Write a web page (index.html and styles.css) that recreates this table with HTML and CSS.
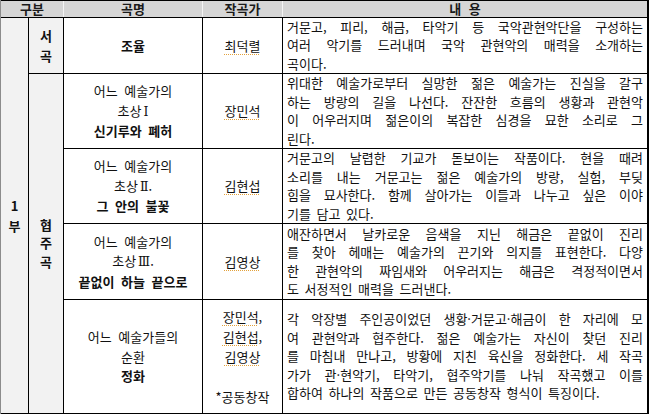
FILE: index.html
```html
<!DOCTYPE html>
<html lang="ko">
<head>
<meta charset="utf-8">
<title>공연 프로그램</title>
<link rel="stylesheet" href="styles.css">
</head>
<body>
<div class="program">
  <div class="head">
    <div class="h">구분</div>
    <div class="h">곡명</div>
    <div class="h">작곡가</div>
    <div class="h">내 용</div>
  </div>

  <div class="part"><p class="txt"><b>1<br>부</b></p></div>
  <div class="sect sect-open"><p class="txt"><b>서<br>곡</b></p></div>
  <div class="sect sect-conc"><p class="txt"><b>협<br>주<br>곡</b></p></div>

  <div class="title"><p class="txt"><b>조율</b></p></div>
  <div class="composer"><p class="txt"><span class="name">최덕렬</span></p></div>
  <div class="desc">
    <span class="ln">거문고, 피리, 해금, 타악기 등 국악관현악단을 구성하는</span>
    <span class="ln">여러 악기를 드러내며 국악 관현악의 매력을 소개하는</span>
    <span class="ln last">곡이다.</span>
  </div>

  <div class="title"><p class="txt">어느 예술가의<br>초상<span class="num">Ⅰ</span><br><b>신기루와 폐허</b></p></div>
  <div class="composer"><p class="txt"><span class="name">장민석</span></p></div>
  <div class="desc">
    <span class="ln">위대한 예술가로부터 실망한 젊은 예술가는 진실을 갈구</span>
    <span class="ln">하는 방랑의 길을 나선다. 잔잔한 흐름의 생황과 관현악</span>
    <span class="ln">이 어우러지며 젊은이의 복잡한 심경을 묘한 소리로 그</span>
    <span class="ln last">린다.</span>
  </div>

  <div class="title"><p class="txt">어느 예술가의<br>초상<span class="num">Ⅱ</span>.<br><b>그 안의 불꽃</b></p></div>
  <div class="composer"><p class="txt"><span class="name">김현섭</span></p></div>
  <div class="desc">
    <span class="ln">거문고의 날렵한 기교가 돋보이는 작품이다. 현을 때려</span>
    <span class="ln">소리를 내는 거문고는 젊은 예술가의 방랑, 실험, 부딪</span>
    <span class="ln">힘을 묘사한다. 함께 살아가는 이들과 나누고 싶은 이야</span>
    <span class="ln last">기를 담고 있다.</span>
  </div>

  <div class="title"><p class="txt">어느 예술가의<br>초상<span class="num">Ⅲ</span>.<br><b>끝없이 하늘 끝으로</b></p></div>
  <div class="composer"><p class="txt"><span class="name">김영상</span></p></div>
  <div class="desc">
    <span class="ln">애잔하면서 날카로운 음색을 지닌 해금은 끝없이 진리</span>
    <span class="ln">를 찾아 헤매는 예술가의 끈기와 의지를 표현한다. 다양</span>
    <span class="ln">한 관현악의 짜임새와 어우러지는 해금은 격정적이면서</span>
    <span class="ln last">도 서정적인 매력을 드러낸다.</span>
  </div>

  <div class="title"><p class="txt">어느 예술가들의<br>순환<br><b>정화</b></p></div>
  <div class="composer"><p class="txt composer-group"><span class="name">장민석</span>,<br><span class="name">김현섭</span>,<br><span class="name">김영상</span><br>&nbsp;<br>*공동창작</p></div>
  <div class="desc">
    <span class="ln">각 악장별 주인공이었던 생황·거문고·해금이 한 자리에 모</span>
    <span class="ln">여 관현악과 협주한다. 젊은 예술가는 자신이 찾던 진리</span>
    <span class="ln">를 마침내 만나고, 방황에 지친 육신을 정화한다. 세 작곡</span>
    <span class="ln">가가 관·현악기, 타악기, 협주악기를 나눠 작곡했고 이를</span>
    <span class="ln last">합하여 하나의 작품으로 만든 공동창작 형식이 특징이다.</span>
  </div>
</div>
</body>
</html>
```

FILE: styles.css
```css
* {
  box-sizing: border-box;
}

html, body {
  margin: 0;
  padding: 0;
  background: #ffffff;
}

body {
  font-family: "Noto Sans CJK KR", "Noto Sans", sans-serif;
  font-size: 13px;
  color: #111111;
}

.program {
  display: grid;
  grid-template-columns: 27px 34px 138px 79px 364px;
  grid-template-rows: 16px 55px 74px 74px 75px 113px;
  gap: 1px;
  width: 649px;
  height: 414px;
  padding: 1px 2px 1px 0;
  border-left: 1px solid #8c8c8c;
  background: #000000;
}

.head {
  grid-column: 1 / -1;
  grid-row: 1;
  display: grid;
  grid-template-columns: 62px 138px 79px 364px;
  gap: 1px;
  background: #f4f4f4;
}

.h {
  background: #d6d6d6;
  font-weight: 700;
  line-height: 16px;
  text-align: center;
  color: #1a1a1a;
  word-spacing: 4px;
}

.txt {
  margin: 0;
  text-align: center;
}

.part,
.sect,
.title,
.composer {
  display: flex;
  align-items: center;
  justify-content: center;
}

.part,
.sect {
  background: #f2f2f2;
  line-height: 20px;
}

.part {
  grid-column: 1;
  grid-row: 2 / 7;
}

.sect-open {
  grid-column: 2;
  grid-row: 2;
}

.sect-conc {
  grid-column: 2;
  grid-row: 3 / 7;
  line-height: 18.5px;
}

.title,
.composer {
  background: #ffffff;
  line-height: 19.5px;
  word-spacing: 3px;
}

.composer {
  line-height: 20px;
}

.name {
  text-decoration: underline dotted #e3a23c;
  text-decoration-thickness: 1px;
  text-underline-offset: 3px;
}

.num {
  font-family: "DejaVu Serif", "Liberation Serif", "Noto Sans CJK KR", serif;
  font-size: 12.5px;
  margin-left: 2px;
}

.desc {
  background: #ffffff;
  display: flex;
  flex-direction: column;
  justify-content: center;
  padding: 0 4px;
  line-height: 18.5px;
  word-spacing: 2px;
}

.ln {
  display: block;
  text-align: justify;
  text-align-last: justify;
}

.ln.last {
  text-align-last: left;
}
```
